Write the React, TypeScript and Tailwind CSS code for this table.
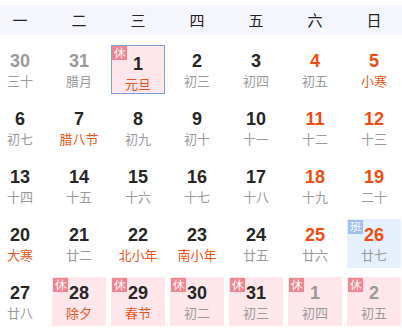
import React from "react";

type Cell = {
  d: string;
  l: string;
  kind?: "weekend" | "dim";
  fest?: boolean;
  bg?: "rest" | "work" | "sel";
  badge?: "休" | "班";
};

const rows: Cell[][] = [
  [
    { d: "30", l: "三十", kind: "dim" },
    { d: "31", l: "腊月", kind: "dim" },
    { d: "1", l: "元旦", fest: true, bg: "sel", badge: "休" },
    { d: "2", l: "初三" },
    { d: "3", l: "初四" },
    { d: "4", l: "初五", kind: "weekend" },
    { d: "5", l: "小寒", kind: "weekend", fest: true },
  ],
  [
    { d: "6", l: "初七" },
    { d: "7", l: "腊八节", fest: true },
    { d: "8", l: "初九" },
    { d: "9", l: "初十" },
    { d: "10", l: "十一" },
    { d: "11", l: "十二", kind: "weekend" },
    { d: "12", l: "十三", kind: "weekend" },
  ],
  [
    { d: "13", l: "十四" },
    { d: "14", l: "十五" },
    { d: "15", l: "十六" },
    { d: "16", l: "十七" },
    { d: "17", l: "十八" },
    { d: "18", l: "十九", kind: "weekend" },
    { d: "19", l: "二十", kind: "weekend" },
  ],
  [
    { d: "20", l: "大寒", fest: true },
    { d: "21", l: "廿二" },
    { d: "22", l: "北小年", fest: true },
    { d: "23", l: "南小年", fest: true },
    { d: "24", l: "廿五" },
    { d: "25", l: "廿六", kind: "weekend" },
    { d: "26", l: "廿七", kind: "weekend", bg: "work", badge: "班" },
  ],
  [
    { d: "27", l: "廿八" },
    { d: "28", l: "除夕", fest: true, bg: "rest", badge: "休" },
    { d: "29", l: "春节", fest: true, bg: "rest", badge: "休" },
    { d: "30", l: "初二", bg: "rest", badge: "休" },
    { d: "31", l: "初三", bg: "rest", badge: "休" },
    { d: "1", l: "初四", kind: "dim", bg: "rest", badge: "休" },
    { d: "2", l: "初五", kind: "dim", bg: "rest", badge: "休" },
  ],
];

const heads = ["一", "二", "三", "四", "五", "六", "日"];

function DayCell({ c }: { c: Cell }) {
  const bgCls =
    c.bg === "sel"
      ? "bg-[#fee6eb] border border-[#7e9fdc]"
      : c.bg === "rest"
      ? "bg-[#fee6eb]"
      : c.bg === "work"
      ? "bg-[#e6effc]"
      : "";
  const numCls =
    c.kind === "dim"
      ? "text-[#9a9a9a]"
      : c.kind === "weekend"
      ? "text-[#f04c12]"
      : "text-[#262626]";
  const lunarCls = c.fest ? "text-[#e8561a]" : "text-[#9a9a9a]";
  return (
    <div className={`relative h-[49px] w-[54px] flex flex-col items-center ${bgCls}`}>
      {c.badge && (
        <div
          className={`absolute left-0 top-0 ml-[1px] mt-[1px] flex h-[14px] w-[15px] items-center justify-center text-[12px] leading-none text-white ${
            c.badge === "休" ? "bg-[#f0848f]" : "bg-[#9fbdf1]"
          }`}
          style={c.bg === "sel" ? { marginLeft: 0, marginTop: 0 } : undefined}
        >
          {c.badge}
        </div>
      )}
      <div
        className={`mt-[6px] text-[18px] font-bold leading-[20px] ${numCls}`}
        style={{ fontFamily: '"Liberation Sans", Arial, sans-serif', marginTop: c.bg === "sel" ? 8 : 6 }}
      >
        {c.d}
      </div>
      <div
        className={`mt-[1px] text-[13px] leading-[18px] ${lunarCls}`}
        style={{ fontFamily: '"Noto Sans CJK SC", sans-serif' }}
      >
        {c.l}
      </div>
    </div>
  );
}

export default function App() {
  return (
    <div className="h-[333px] w-[402px] overflow-hidden bg-white">
      <div className="mt-[5px] h-[30px] bg-[#f4f6fb]">
        <div className="ml-[-7px] grid w-[408px] grid-cols-[repeat(7,54px)] gap-x-[5px]">
          {heads.map((h) => (
            <div
              key={h}
              className="flex h-[30px] items-center justify-center text-[15px] text-[#222]"
              style={{ fontFamily: '"Noto Sans CJK SC", sans-serif' }}
            >
              {h}
            </div>
          ))}
        </div>
      </div>
      <div className="ml-[-7px] mt-[10px] flex w-[408px] flex-col gap-y-[9px]">
        {rows.map((r, i) => (
          <div key={i} className="grid grid-cols-[repeat(7,54px)] gap-x-[5px]">
            {r.map((c, j) => (
              <DayCell key={j} c={c} />
            ))}
          </div>
        ))}
      </div>
    </div>
  );
}
